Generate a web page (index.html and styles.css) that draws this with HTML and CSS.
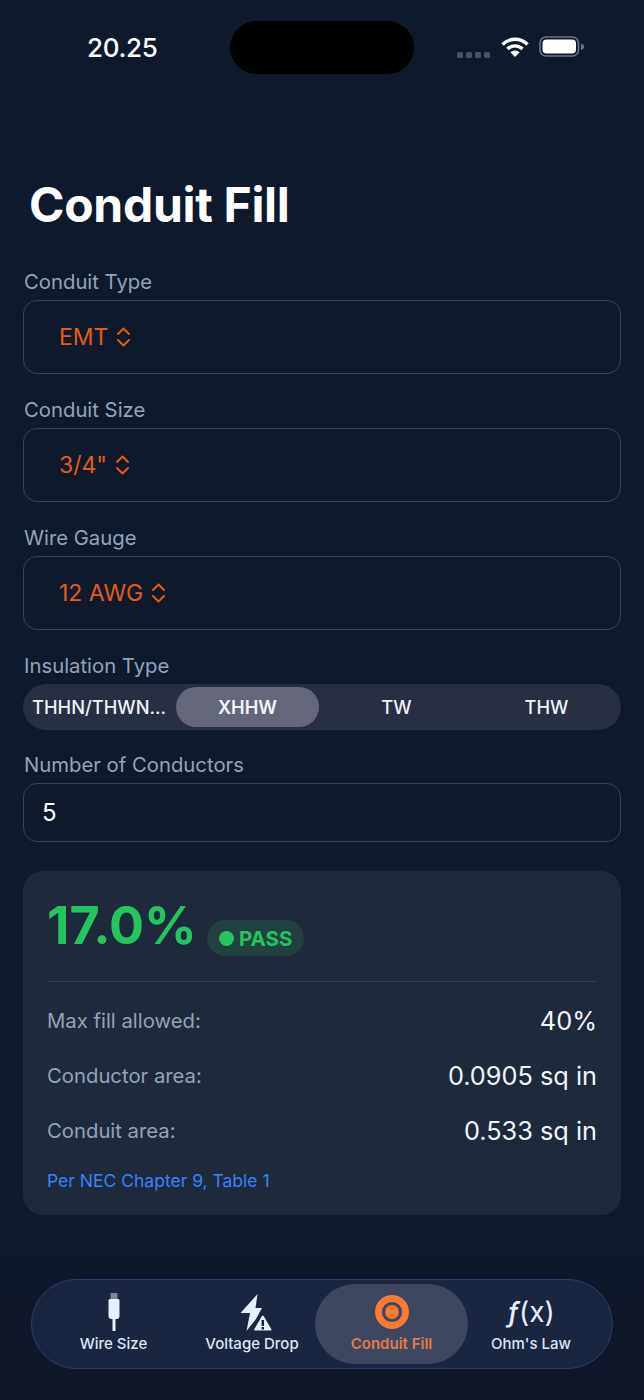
FILE: index.html
```html
<!DOCTYPE html>
<html lang="en">
<head>
<meta charset="utf-8">
<title>Conduit Fill</title>
<link rel="stylesheet" href="styles.css">
</head>
<body>
<div class="screen">
  <header class="status">
    <span class="time">20.25</span>
    <div class="island"></div>
    <div class="status-icons">
      <div class="dots"><i></i><i></i><i></i><i></i></div>
      <svg class="wifi" width="28" height="22" viewBox="0 0 28 22"><path d="M1.500 8.500a17.500 17.500 0 0 1 25 0" fill="none" stroke="#fff" stroke-width="3.400"/><path d="M6.500 13a10.500 10.500 0 0 1 15 0" fill="none" stroke="#fff" stroke-width="3.400"/><path d="M9.400 16.200a6.800 6.800 0 0 1 9.200 0L14 21z" fill="#fff"/></svg>
      <svg class="battery" width="46" height="22" viewBox="0 0 46 22"><rect x="1" y="1" width="38.500" height="19" rx="6" fill="none" stroke="#6b7280" stroke-width="1.600"/><rect x="3.500" y="3.500" width="33.500" height="14" rx="4" fill="#fff"/><path d="M42 7.500c2.400 .5 3 1.500 3 3.200s-.6 2.800-3 3.300z" fill="#6b7280"/></svg>
    </div>
  </header>

  <main class="content">
    <h1 class="title">Conduit Fill</h1>

    <section class="field">
      <label class="label">Conduit Type</label>
      <div class="select"><span>EMT</span><svg class="chev" width="15" height="20" viewBox="0 0 15 20"><path d="M2 7l5.500-5.500L13 7M2 13l5.500 5.500L13 13" fill="none" stroke="currentColor" stroke-width="2" stroke-linecap="round" stroke-linejoin="round"/></svg></div>
    </section>
    <section class="field">
      <label class="label">Conduit Size</label>
      <div class="select"><span>3/4"</span><svg class="chev" width="15" height="20" viewBox="0 0 15 20"><path d="M2 7l5.500-5.500L13 7M2 13l5.500 5.500L13 13" fill="none" stroke="currentColor" stroke-width="2" stroke-linecap="round" stroke-linejoin="round"/></svg></div>
    </section>
    <section class="field">
      <label class="label">Wire Gauge</label>
      <div class="select"><span>12 AWG</span><svg class="chev" width="15" height="20" viewBox="0 0 15 20"><path d="M2 7l5.500-5.500L13 7M2 13l5.500 5.500L13 13" fill="none" stroke="currentColor" stroke-width="2" stroke-linecap="round" stroke-linejoin="round"/></svg></div>
    </section>

    <section class="field field-seg">
      <label class="label">Insulation Type</label>
      <div class="segments">
        <span class="seg">THHN/THWN...</span>
        <span class="seg seg-active">XHHW</span>
        <span class="seg">TW</span>
        <span class="seg">THW</span>
      </div>
    </section>

    <section class="field field-num">
      <label class="label">Number of Conductors</label>
      <div class="input">5</div>
    </section>

    <section class="card">
      <div class="result">
        <span class="percent">17.0%</span>
        <span class="badge"><i class="badge-dot"></i>PASS</span>
      </div>
      <div class="row"><span class="row-label">Max fill allowed:</span><span class="row-value">40%</span></div>
      <div class="row"><span class="row-label">Conductor area:</span><span class="row-value">0.0905 sq in</span></div>
      <div class="row"><span class="row-label">Conduit area:</span><span class="row-value">0.533 sq in</span></div>
      <p class="note">Per NEC Chapter 9, Table 1</p>
    </section>
  </main>

  <nav class="tabs">
    <div class="tab tab-wire">
      <svg class="tab-icon" width="40" height="40" viewBox="0 0 40 40"><rect x="16.500" y="1" width="7" height="6" fill="#7f8599"/><path d="M14.500 8.500a1.500 1.500 0 0 1 1.500-1.500h8a1.500 1.500 0 0 1 1.500 1.500V24a3 3 0 0 1-3 3h-5a3 3 0 0 1-3-3z" fill="#e6effc"/><rect x="18.500" y="26" width="3" height="13" fill="#e6effc"/></svg>
      <span class="tab-label">Wire Size</span>
    </div>
    <div class="tab tab-drop">
      <svg class="tab-icon" width="40" height="40" viewBox="0 0 40 40"><path d="M25.500 2 8.500 21H18l-3.500 18L24 27l6-11h-6.500z" fill="#e6effc"/><path d="M22.800 39a1.300 1.300 0 0 1-1.100-2l7.700-13.200a1.600 1.600 0 0 1 2.800 0L39.900 37a1.300 1.300 0 0 1-1.100 2z" fill="#e6effc" stroke="#1a2540" stroke-width="1.200"/><rect x="29.600" y="28" width="2.400" height="6" fill="#1a2540"/><rect x="29.600" y="35" width="2.400" height="2.500" fill="#1a2540"/></svg>
      <span class="tab-label">Voltage Drop</span>
    </div>
    <div class="tab tab-active">
      <svg class="tab-icon" width="40" height="40" viewBox="0 0 40 40"><circle cx="20" cy="20" r="17" fill="#f97a35"/><circle cx="20" cy="20" r="8.500" fill="none" stroke="#3d4760" stroke-width="3.200"/></svg>
      <span class="tab-label">Conduit Fill</span>
    </div>
    <div class="tab tab-ohm">
      <span class="fx"><em class="fx-f">ƒ</em>(x)</span>
      <span class="tab-label">Ohm's Law</span>
    </div>
  </nav>
</div>
</body>
</html>
```

FILE: styles.css
```css
* { box-sizing: border-box; }
html, body { margin: 0; padding: 0; }
body {
  width: 644px;
  height: 1400px;
  overflow: hidden;
  background: #0e192c;
  font-family: Inter, "Liberation Sans", sans-serif;
  color: #fff;
}
.screen {
  width: 644px;
  height: 1400px;
  display: flex;
  flex-direction: column;
  background: linear-gradient(#0e192c 0, #0e192c 1230px, #0e1628 1300px, #0e1628 1400px);
}

/* status bar */
.status {
  height: 94px;
  padding-top: 21px;
  display: flex;
  align-items: flex-start;
  position: relative;
}
.time {
  margin-left: 87px;
  margin-top: 11px;
  font-size: 26px;
  line-height: 32px;
  font-weight: 500;
  letter-spacing: -0.3px;
}
.island {
  width: 184px;
  height: 53px;
  border-radius: 27px;
  background: #000;
  margin-left: 72px;
}
.status-icons {
  margin-left: 43px;
  display: flex;
  align-items: flex-start;
  height: 53px;
}
.dots { display: flex; gap: 3px; margin-top: 31px; }
.dots i { width: 6px; height: 6px; border-radius: 1.5px; background: #4b5162; }
.wifi { margin-left: 11px; margin-top: 15px; }
.battery { margin-left: 10px; margin-top: 15px; }

/* content */
.content { padding: 0 23px; flex: 1; display: flex; flex-direction: column; }
.title {
  margin: 81px 0 0 6px;
  font-size: 48px;
  line-height: 60px;
  font-weight: 700;
  letter-spacing: -0.3px;
}
.field { margin-top: 0; }
.label {
  display: block;
  height: 30px;
  padding-left: 1px;
  font-size: 20.300px;
  line-height: 24px;
  color: #94a3b8;
}
.title + .field { margin-top: 35px; }
.select {
  height: 74px;
  margin-bottom: 24px;
  padding-left: 35px;
  display: flex;
  align-items: center;
  gap: 8px;
  border: 1.5px solid #364459;
  border-radius: 14px;
  font-size: 23px;
  color: #e25c18;
}
.chev { display: block; }

.segments {
  height: 46px;
  padding: 3px 0;
  display: flex;
  border-radius: 23px;
  background: #292f42;
}
.seg {
  width: 150px;
  display: flex;
  align-items: center;
  justify-content: center;
  font-size: 18.300px;
  font-weight: 500;
  color: #f1f3f8;
}
.seg:first-child { width: 153px; justify-content: flex-start; padding-left: 9px; white-space: nowrap; }
.seg-active {
  width: 143px;
  border-radius: 20px;
  background: #636779;
  font-weight: 600;
}
.seg:nth-child(3) { width: 155px; }
.seg:nth-child(4) { width: 145px; }

.field-num { margin-top: 23px; }
.input {
  height: 59px;
  padding-left: 18px;
  display: flex;
  align-items: center;
  border: 1.5px solid #364459;
  border-radius: 14px;
  font-size: 24px;
  color: #fff;
}

/* result card */
.card {
  margin-top: 29px;
  height: 344px;
  padding: 24px 24px 0;
  border-radius: 20px;
  background: #1e293b;
}
.result {
  height: 87px;
  display: flex;
  align-items: flex-start;
  border-bottom: 1px solid #334155;
}
.percent {
  font-size: 52px;
  line-height: 62px;
  font-weight: 700;
  color: #22c55e;
}
.badge {
  margin: 25px 0 0 10px;
  height: 36px;
  padding: 0 12px;
  display: flex;
  align-items: center;
  gap: 5px;
  border-radius: 18px;
  background: #21403f;
  color: #22c55e;
  font-size: 20.500px;
  font-weight: 700;
}
.badge-dot { width: 15px; height: 15px; border-radius: 50%; background: #22c55e; }
.row {
  height: 55px;
  display: flex;
  align-items: center;
  justify-content: space-between;
}
.result + .row { margin-top: 11px; }
.row-label { font-size: 20.300px; color: #94a3b8; }
.row-value { font-size: 25.300px; color: #f1f5f9; }
.note {
  margin: 11px 0 0;
  font-size: 17.500px;
  line-height: 24px;
  color: #3b82f6;
}

/* tab bar */
.tabs {
  margin: 0 31px 31px;
  height: 90px;
  padding: 4px 0;
  display: flex;
  border: 1.5px solid #2c3d6e;
  border-radius: 45px;
  background: #1a2540;
}
.tab {
  display: flex;
  flex-direction: column;
  align-items: center;
  justify-content: flex-start;
  padding-top: 8px;
}
.tab-wire { width: 152px; padding-left: 11px; }
.tab-drop { width: 131px; padding-left: 5px; }
.tab-active { width: 153px; border-radius: 40px; background: #3d4760; }
.tab-ohm { width: 126px; }
.tab-icon { display: block; }
.tab-label {
  margin-top: 3px;
  font-size: 15px;
  line-height: 18px;
  font-weight: 500;
  color: #dfe5f2;
}
.tab-active .tab-label { font-weight: 600; color: #e07b4a; }
.fx {
  height: 40px;
  font-size: 28px;
  line-height: 40px;
  color: #e6effc;
}
.fx-f { font-style: italic; font-weight: 500; }
```
